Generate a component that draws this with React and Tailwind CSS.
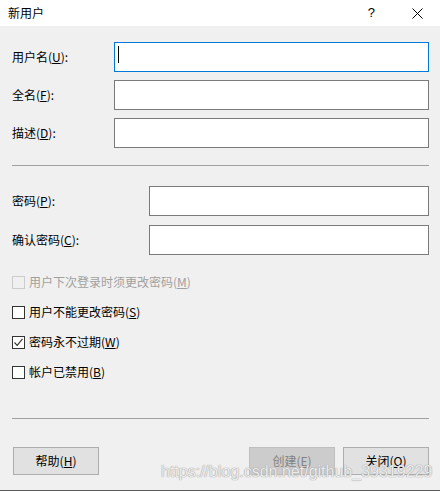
import React from 'react';

const font = { fontFamily: '"Microsoft YaHei UI", "Noto Sans CJK SC", "Liberation Sans", sans-serif' };

function Field({ label, keyChar, labelWidth, focused, mt }) {
  return (
    <div className={`flex items-center ${mt}`}>
      <div className="shrink-0 text-[12px] text-black" style={{ width: labelWidth }}>
        {label}(<u>{keyChar}</u>):
      </div>
      <div
        className={`relative h-[30px] flex-1 bg-white border ${
          focused ? 'border-[#0078d7]' : 'border-[#7a7a7a]'
        }`}
      >
        {focused && <span className="absolute left-[3px] top-[3px] h-[17px] w-px bg-black" />}
      </div>
    </div>
  );
}

function Check({ label, keyChar, checked, disabled }) {
  return (
    <div className="flex h-[30px] items-center">
      <span
        className={`flex h-[13px] w-[13px] items-center justify-center border ${
          disabled ? 'border-[#cccccc] bg-[#f0f0f0]' : 'border-[#333333] bg-white'
        }`}
      >
        {checked && (
          <svg width="11" height="11" viewBox="0 0 11 11">
            <path d="M1.5 5.5 L4.2 8.3 L9.5 1.8" fill="none" stroke="#333" strokeWidth="1.1" />
          </svg>
        )}
      </span>
      <span className={`ml-[4px] text-[12px] ${disabled ? 'text-[#a0a0a0]' : 'text-black'}`}>
        {label}(<u>{keyChar}</u>)
      </span>
    </div>
  );
}

function Button({ label, keyChar, disabled }) {
  return (
    <div
      className={`flex h-[28px] w-[86px] items-center justify-center border text-[12px] ${
        disabled
          ? 'border-[#bfbfbf] bg-[#cccccc] text-[#838383]'
          : 'border-[#adadad] bg-[#e1e1e1] text-black'
      }`}
    >
      {label}(<u>{keyChar}</u>)
    </div>
  );
}

export default function App() {
  return (
    <div className="relative h-[491px] w-[440px] overflow-hidden border-b border-[#5a5a5a] bg-[#f0f0f0]" style={font}>
      {/* title bar */}
      <div className="flex h-[26px] items-center bg-white pl-[8px]">
        <span className="text-[12px] text-black">新用户</span>
        <span className="ml-auto mr-[37px] text-[13px] text-black" style={{ fontFamily: '"Liberation Sans", sans-serif' }}>
          ?
        </span>
        <svg className="mr-[17px]" width="11" height="11" viewBox="0 0 11 11">
          <path d="M0.5 0.5 L10.5 10.5 M10.5 0.5 L0.5 10.5" stroke="#000" strokeWidth="1" />
        </svg>
      </div>

      <div className="pl-[12px] pr-[11px]">
        <Field label="用户名" keyChar="U" labelWidth={102} focused mt="mt-[16px]" />
        <Field label="全名" keyChar="F" labelWidth={102} mt="mt-[8px]" />
        <Field label="描述" keyChar="D" labelWidth={102} mt="mt-[8px]" />

        <div className="mt-[17px] h-px bg-[#a0a0a0]" />

        <Field label="密码" keyChar="P" labelWidth={137} mt="mt-[20px]" />
        <Field label="确认密码" keyChar="C" labelWidth={137} mt="mt-[9px]" />

        <div className="mt-[12px]">
          <Check label="用户下次登录时须更改密码" keyChar="M" disabled />
          <Check label="用户不能更改密码" keyChar="S" />
          <Check label="密码永不过期" keyChar="W" checked />
          <Check label="帐户已禁用" keyChar="B" />
        </div>

        <div className="mt-[31px] h-px bg-[#a0a0a0]" />

        <div className="mt-[28px] flex items-center pl-px">
          <Button label="帮助" keyChar="H" />
          <div className="ml-auto flex gap-[8px]">
            <Button label="创建" keyChar="E" disabled />
            <Button label="关闭" keyChar="O" />
          </div>
        </div>
      </div>

      {/* watermark */}
      <div
        className="pointer-events-none absolute left-[161px] top-[463px] whitespace-nowrap text-[16px] leading-[18px] text-white/80"
        style={{ fontFamily: '"Liberation Sans", sans-serif', textShadow: '0 0 1px #9a9a9a, 0 0 1px #9a9a9a' }}
      >
        https://blog.csdn.net/github_39319229
      </div>
    </div>
  );
}
